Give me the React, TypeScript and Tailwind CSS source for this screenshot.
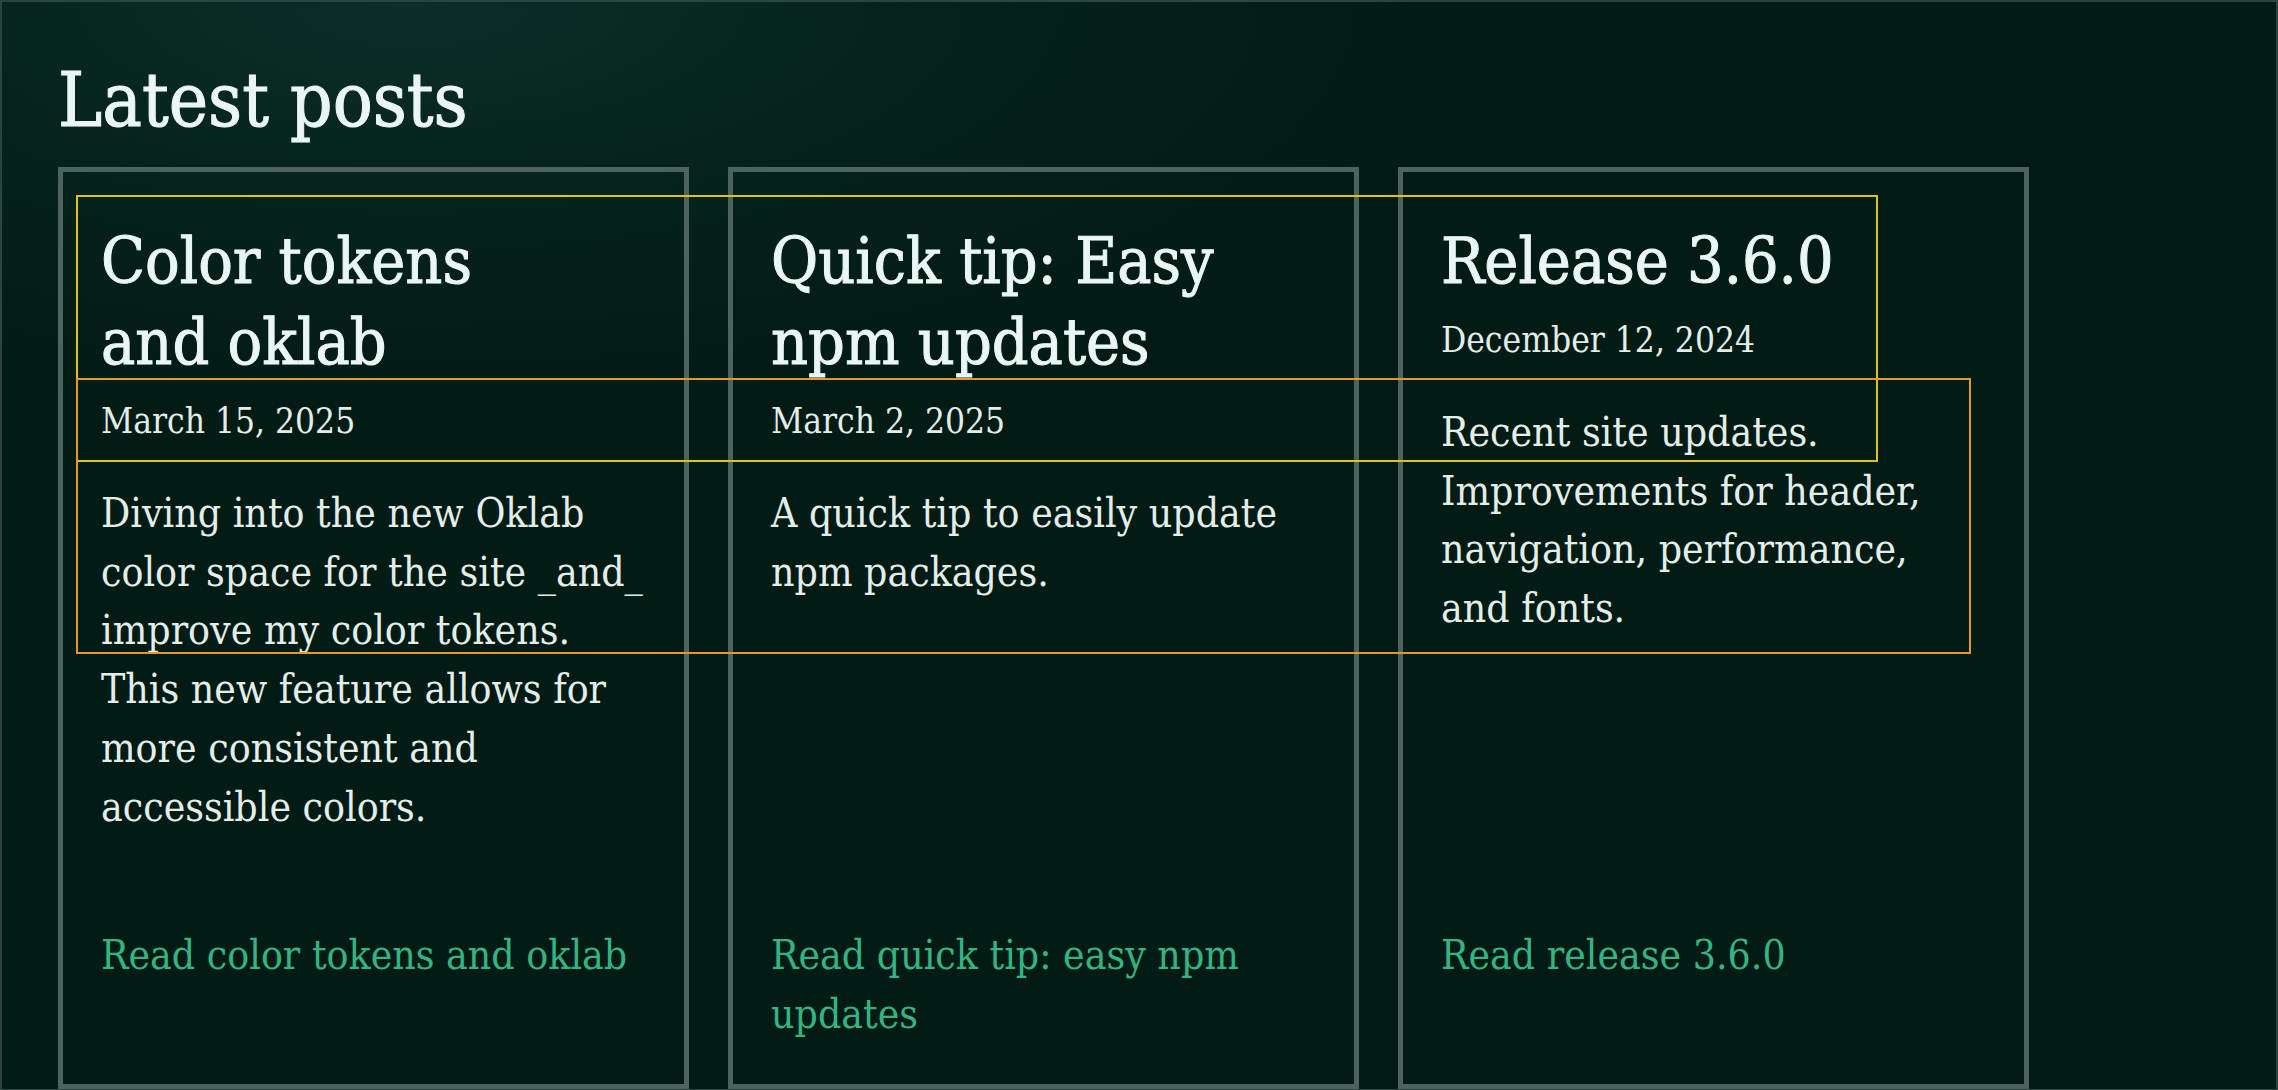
const posts = [
  {
    title: "Color tokens and oklab",
    date: "March 15, 2025",
    summary:
      "Diving into the new Oklab color space for the site _and_ improve my color tokens. This new feature allows for more consistent and accessible colors.",
    link: "Read color tokens and oklab",
  },
  {
    title: "Quick tip: Easy npm updates",
    date: "March 2, 2025",
    summary: "A quick tip to easily update npm packages.",
    link: "Read quick tip: easy npm updates",
  },
  {
    title: "Release 3.6.0",
    date: "December 12, 2024",
    summary: "Recent site updates. Improvements for header, navigation, performance, and fonts.",
    link: "Read release 3.6.0",
  },
];

function PostCard({ post }: { post: (typeof posts)[number] }) {
  return (
    <article className="row-span-2 grid grid-rows-subgrid gap-y-[90px] border-[5px] border-[#4e635e] pl-[38px] pr-[32px] pt-[49px] pb-[40px]">
      <div className="flex flex-col">
        <h3 className="text-[64px] leading-[81px] text-balance text-[#eaf6f4] [-webkit-text-stroke:1px_#eaf6f4]">
          {post.title}
        </h3>
        <time className="mt-[15px] text-[35px] leading-[46px] text-[#e3eeea]">{post.date}</time>
        <p className="mt-[40px] text-[40.6px] leading-[58.7px] text-pretty text-[#e3eeea]">{post.summary}</p>
      </div>
      <a href="#" className="self-start text-[40.6px] leading-[58.7px] text-[#34b383]">
        {post.link}
      </a>
    </article>
  );
}

export default function App() {
  return (
    <div className="min-h-screen border-2 border-[#2b4540] bg-[radial-gradient(1100px_420px_at_18%_0%,#0c2e28_0%,#05221b_50%,#021b14_100%)] pl-[56px] pt-[50px] font-['DejaVu_Serif',serif] [font-stretch:condensed] text-[#e6f2ef]">
      <h2 className="text-[74px] leading-[96px] text-[#eaf6f4] [-webkit-text-stroke:1px_#eaf6f4]">Latest posts</h2>
      <div className="relative mt-[19px] grid w-[1971px] grid-cols-3 grid-rows-[auto_auto] gap-x-[39px]">
        {posts.map((post) => (
          <PostCard key={post.title} post={post} />
        ))}
        {/* debug outlines */}
        <div className="pointer-events-none absolute left-[18px] top-[28px] h-[267px] w-[1802px] border-2 border-[#e0c21c]" />
        <div className="pointer-events-none absolute left-[18px] top-[211px] h-[276px] w-[1895px] border-2 border-[#e39a24]" />
      </div>
    </div>
  );
}
